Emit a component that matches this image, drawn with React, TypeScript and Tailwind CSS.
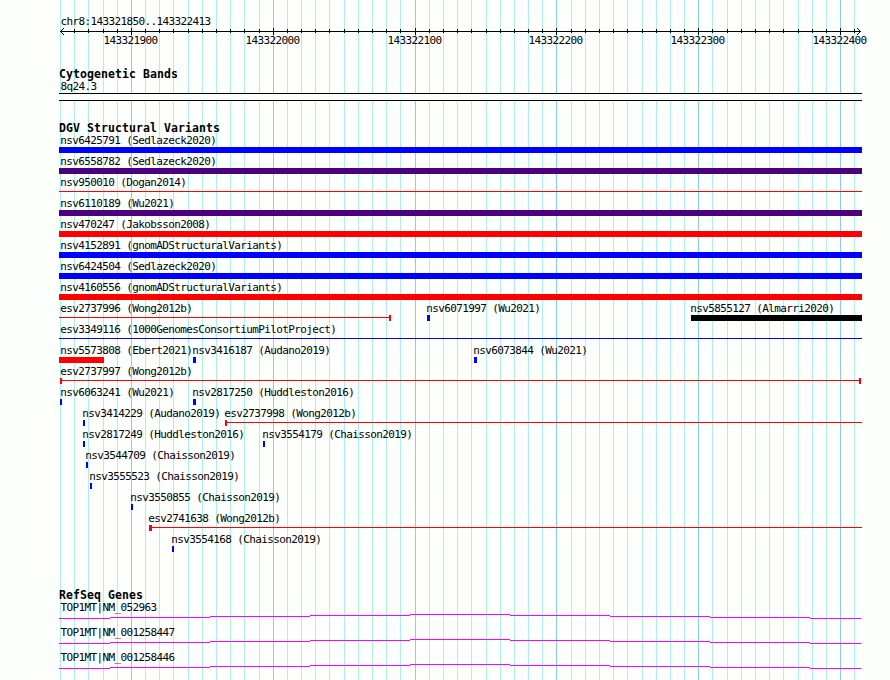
type Feature = {
	label: string;
	labelX: number;
	x: number;
	end: number;
	color: string;
	// a "line" feature is a thin span with optional end caps
	line?: boolean;
	startCap?: number;
	endCap?: number;
};

const LEFT = 59;
const RIGHT = 862;

const blue = "bg-[#0000ff]";
const red = "bg-[#ff0000]";
const indigo = "bg-[#4b0082]";
const black = "bg-black";

const full = (label: string, color: string, line = false): Feature[] => [
	{ label, labelX: 60, x: LEFT, end: RIGHT, color, line },
];

const mark = (label: string, x: number, width: number): Feature => ({
	label,
	labelX: x === 60 ? 60 : x - 1,
	x,
	end: x + width,
	color: blue,
});

const rows: Feature[][] = [
	full("nsv6425791 (Sedlazeck2020)", blue),
	full("nsv6558782 (Sedlazeck2020)", indigo),
	full("nsv950010 (Dogan2014)", red, true),
	full("nsv6110189 (Wu2021)", indigo),
	full("nsv470247 (Jakobsson2008)", red),
	full("nsv4152891 (gnomADStructuralVariants)", blue),
	full("nsv6424504 (Sedlazeck2020)", blue),
	full("nsv4160556 (gnomADStructuralVariants)", red),
	[
		{ label: "esv2737996 (Wong2012b)", labelX: 60, x: 59, end: 391, color: red, line: true, endCap: 2 },
		mark("nsv6071997 (Wu2021)", 427, 3),
		{ label: "nsv5855127 (Almarri2020)", labelX: 690, x: 691, end: RIGHT, color: black },
	],
	full("esv3349116 (1000GenomesConsortiumPilotProject)", blue, true),
	[
		{ label: "nsv5573808 (Ebert2021)", labelX: 60, x: 59, end: 104, color: red },
		mark("nsv3416187 (Audano2019)", 193, 3),
		mark("nsv6073844 (Wu2021)", 474, 3),
	],
	[
		{ label: "esv2737997 (Wong2012b)", labelX: 60, x: 60, end: 861, color: red, line: true, startCap: 2, endCap: 2 },
	],
	[mark("nsv6063241 (Wu2021)", 60, 2), mark("nsv2817250 (Huddleston2016)", 193, 3)],
	[
		mark("nsv3414229 (Audano2019)", 83, 2),
		{ label: "esv2737998 (Wong2012b)", labelX: 224, x: 225, end: RIGHT, color: red, line: true, startCap: 2 },
	],
	[mark("nsv2817249 (Huddleston2016)", 83, 2), mark("nsv3554179 (Chaisson2019)", 263, 2)],
	[mark("nsv3544709 (Chaisson2019)", 86, 2)],
	[mark("nsv3555523 (Chaisson2019)", 90, 2)],
	[mark("nsv3550855 (Chaisson2019)", 131, 2)],
	[
		{ label: "esv2741638 (Wong2012b)", labelX: 148, x: 149, end: RIGHT, color: red, line: true, startCap: 3 },
	],
	[mark("nsv3554168 (Chaisson2019)", 172, 2)],
];

const genes = ["TOP1MT|NM_052963", "TOP1MT|NM_001258447", "TOP1MT|NM_001258446"];

// [start, end, y] of each step of the intron hat
const hat = [
	[59, 110, 4],
	[110, 210, 3],
	[210, 310, 2],
	[310, 410, 1],
	[410, 510, 0],
	[510, 610, 1],
	[610, 710, 2],
	[710, 810, 3],
	[810, 861, 4],
];

// one tick every 10 bp, a major one every 100 bp
const ticks = Array.from({ length: 57 }, (_, i) => ({
	x: Math.round(60 + i * 14.184),
	major: i % 10 === 5,
}));

const axisLabels = ["143321900", "143322000", "143322100", "143322200", "143322300", "143322400"];

function Gridlines() {
	return (
		<svg className="absolute inset-0" width="890" height="680" shapeRendering="crispEdges">
			{ticks.map((t) => (
				<rect key={t.x} x={t.x} y={0} width={1} height={680} fill={t.major ? "#87ceeb" : "#afeeee"} />
			))}
		</svg>
	);
}

function Axis() {
	return (
		<svg className="block" width="890" height="7" shapeRendering="crispEdges">
			<rect x={60} y={3} width={801} height={1} />
			{ticks.slice(1).map((t) => (
				<rect key={t.x} x={t.x} y={t.major ? 0 : 1} width={1} height={t.major ? 7 : 4} />
			))}
			{[1, 2, 3].map((d) => (
				<g key={d}>
					<rect x={60 + d} y={3 - d} width={1} height={1} />
					<rect x={60 + d} y={3 + d} width={1} height={1} />
					<rect x={860 - d} y={3 - d} width={1} height={1} />
					<rect x={860 - d} y={3 + d} width={1} height={1} />
				</g>
			))}
		</svg>
	);
}

function Title({ children }: { children: string }) {
	return (
		<h2 className="h-[13px] pl-[59px] text-[11.5px] leading-[13px] font-bold tracking-[0.077px]">{children}</h2>
	);
}

function Glyph({ feature }: { feature: Feature }) {
	const { line, color, startCap, endCap, x, end } = feature;
	if (!line) {
		return <div className={`h-[6px] ${color}`} style={{ marginLeft: x, width: end - x }}></div>;
	}
	return (
		<div className="flex h-[6px]" style={{ marginLeft: x, width: end - x }}>
			{startCap && <div className={`h-[6px] ${color}`} style={{ width: startCap }}></div>}
			<div className={`mt-[2px] h-px flex-1 ${color}`}></div>
			{endCap && <div className={`h-[6px] ${color}`} style={{ width: endCap }}></div>}
		</div>
	);
}

export default function App() {
	return (
		<div className="relative h-[680px] w-[890px] overflow-hidden bg-[#fcfffc] font-['DejaVu_Sans_Mono',monospace] text-[11px] leading-[11px] tracking-[-0.622px] whitespace-pre text-black">
			<Gridlines />
			<div className="relative pt-[15px]">
				<p className="h-[13px] pl-[60.4px] leading-[13px]">chr8:143321850..143322413</p>
				<Axis />
				<div className="grid h-[13px]">
					{axisLabels.map((label, i) => (
						<span
							key={label}
							className="col-start-1 row-start-1"
							style={{ marginLeft: ticks[5 + i * 10].x - 27.6 }}
						>
							{label}
						</span>
					))}
				</div>

				<section className="pt-5">
					<Title>Cytogenetic Bands</Title>
					<p className="h-[12px] pl-[60.4px]">8q24.3</p>
					<div className="ml-[59px] h-[8px] w-[803px] border-y border-black bg-[#fcfffc]"></div>
				</section>

				<section className="pt-[21px]">
					<Title>DGV Structural Variants</Title>
					{rows.map((row, i) => (
						<div key={i} className="grid h-[21px] content-start">
							{row.map((feature) => (
								<div key={feature.label} className="col-start-1 row-start-1">
									<p className="h-[12px]" style={{ marginLeft: feature.labelX + 0.2 }}>
										{feature.label}
									</p>
									<Glyph feature={feature} />
								</div>
							))}
						</div>
					))}
				</section>

				<section className="pt-[34px]">
					<Title>RefSeq Genes</Title>
					{genes.map((gene) => (
						<div key={gene} className="h-[25px]">
							<p className="h-[12px] pl-[60.4px]">{gene}</p>
							<svg className="block" width="890" height="5" shapeRendering="crispEdges">
								{hat.map(([start, end, y]) => (
									<rect key={start} x={start} y={y} width={end - start} height={1} fill="#ff00ff" />
								))}
							</svg>
						</div>
					))}
				</section>
			</div>
		</div>
	);
}
